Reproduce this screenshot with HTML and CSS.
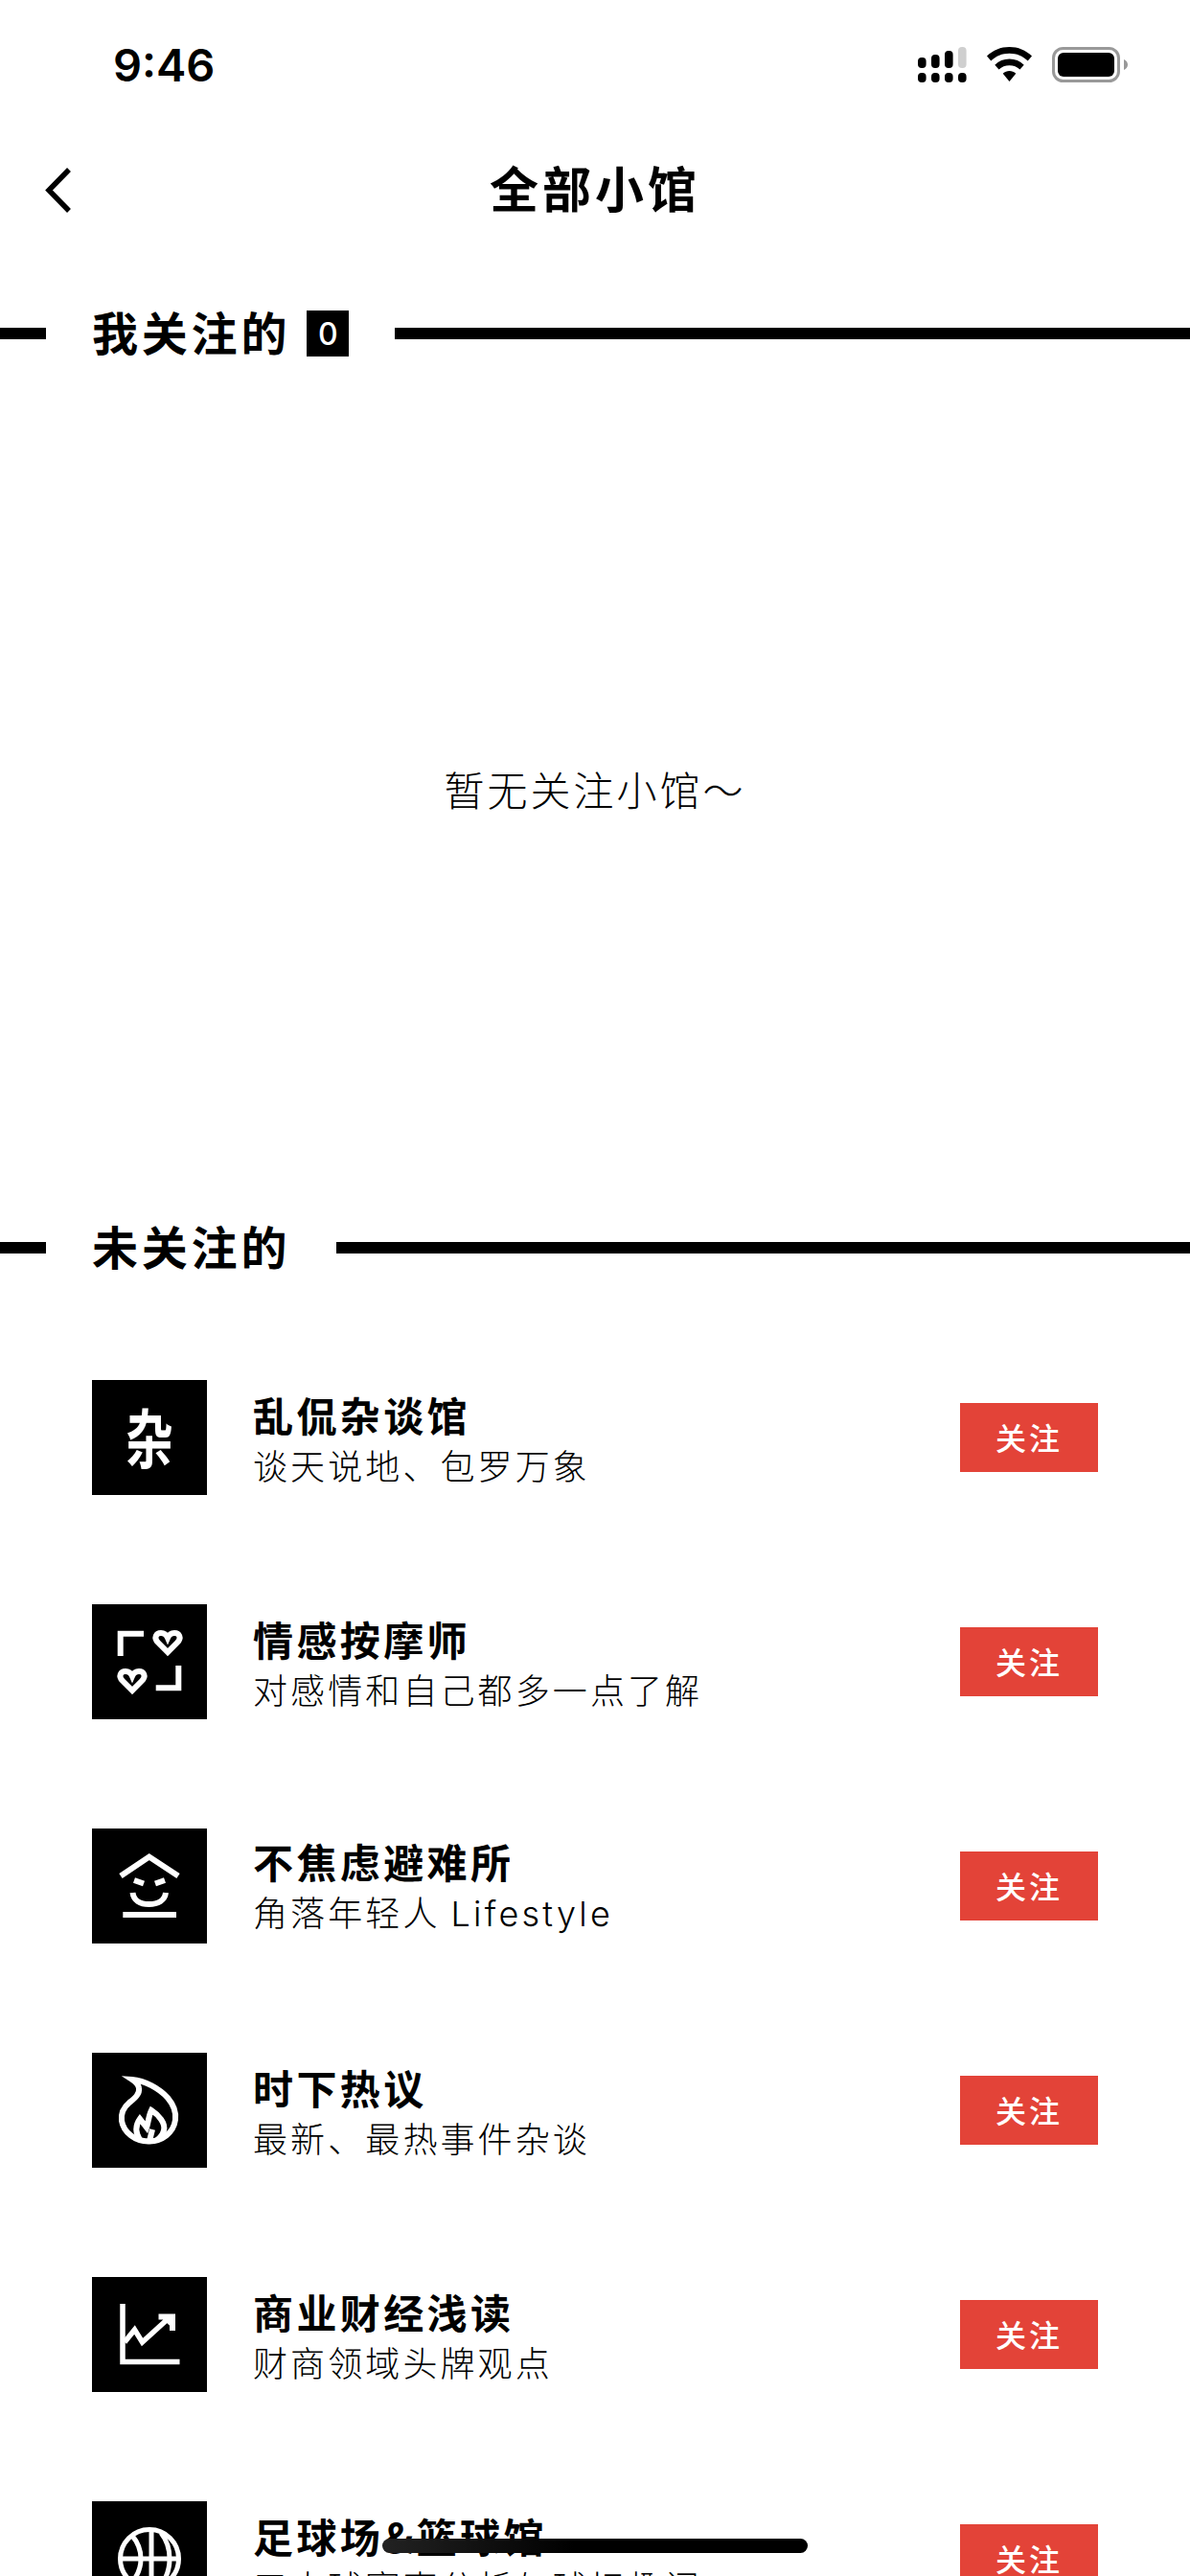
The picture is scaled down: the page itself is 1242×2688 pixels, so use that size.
FILE: index.html
```html
<!DOCTYPE html>
<html lang="zh-CN">
<head>
    <meta charset="UTF-8">
    <meta name="viewport" content="width=device-width, initial-scale=1.0">
    <title>全部小馆</title>
    <link rel="stylesheet" href="styles.css">
</head>
<body>
    <!-- Barra de estado -->
    <div class="status-bar">
        <span class="time">9:46</span>
        <div class="status-icons">
            <svg class="ic-signal" width="51" height="37" viewBox="0 0 51 37">
                <rect x="0" y="11" width="8.6" height="11" rx="4"/>
                <rect x="14" y="8" width="8.6" height="14" rx="4"/>
                <rect x="28" y="4" width="8.6" height="18" rx="4"/>
                <rect x="42" y="0" width="8.6" height="22" rx="4" fill="#cfcfcf"/>
                <rect x="0" y="27" width="8.6" height="10" rx="4"/>
                <rect x="14" y="27" width="8.6" height="10" rx="4"/>
                <rect x="28" y="27" width="8.6" height="10" rx="4"/>
                <rect x="42" y="27" width="8.6" height="10" rx="4"/>
            </svg>
            <svg class="ic-wifi" width="47" height="36" viewBox="0 0 47 36">
                <path d="M23.5 0C14.500 0 6.500 3.300 0 9.500L4.300 14.500C9.500 9.500 16 6.800 23.500 6.800C31 6.800 37.500 9.500 42.700 14.500L47 9.500C40.500 3.300 32.500 0 23.500 0Z"/>
                <path d="M23.500 12.500C17.500 12.500 12.500 14.600 8.300 18.700L12.500 23.600C15.500 20.700 19.200 19.200 23.500 19.200C27.800 19.200 31.500 20.700 34.500 23.600L38.700 18.700C34.500 14.600 29.500 12.500 23.500 12.500Z"/>
                <path d="M23.500 25C21 25 18.700 25.900 16.700 27.700L23.500 36L30.300 27.700C28.300 25.900 26 25 23.500 25Z"/>
            </svg>
            <svg class="ic-battery" width="79" height="37" viewBox="0 0 79 37">
                <rect x="1.500" y="1.500" width="68" height="34" rx="10" fill="none" stroke="#999" stroke-width="3"/>
                <rect x="6" y="6" width="59" height="25" rx="6"/>
                <path d="M75 13C77.500 14 79 16 79 18.500C79 21 77.500 23 75 24Z" fill="#999"/>
            </svg>
        </div>
    </div>

    <!-- Cabecera -->
    <header class="nav">
        <svg class="back" width="28" height="47" viewBox="0 0 28 47">
            <polyline points="25,2 4,23.500 25,45" fill="none" stroke="#000" stroke-width="5.500"/>
        </svg>
        <h1 class="nav-title">全部小馆</h1>
    </header>

    <!-- Seguidos -->
    <div class="section-head first">
        <span class="line-short"></span>
        <h2 class="section-title">我关注的</h2>
        <span class="badge">0</span>
        <span class="line-long"></span>
    </div>
    <div class="empty">
        <p class="empty-text">暂无关注小馆～</p>
    </div>

    <!-- No seguidos -->
    <div class="section-head">
        <span class="line-short"></span>
        <h2 class="section-title">未关注的</h2>
        <span class="line-long"></span>
    </div>

    <div class="list">
        <div class="row">
            <div class="thumb"><span class="thumb-char">杂</span></div>
            <div class="info">
                <h3 class="name">乱侃杂谈馆</h3>
                <p class="desc">谈天说地、包罗万象</p>
            </div>
            <button class="btn-follow">关注</button>
        </div>

        <div class="row">
            <div class="thumb">
                <svg width="120" height="120" viewBox="0 0 120 120" fill="none" stroke="#fff" stroke-width="6">
                    <path d="M29.700 54V30.700H54"/>
                    <path d="M66.700 87.300H90.300V64"/>
                    <path d="M79 50L69 40C64 35 67 30 72 30C75 30 77.500 31.500 79 35C80.500 31.500 83 30 86 30C91 30 94 35 89 40Z"/>
                    <path d="M42 90L32 80C27 75 30 70 35 70C38 70 40.500 71.500 42 75C43.500 71.500 46 70 49 70C54 70 57 75 52 80Z"/>
                </svg>
            </div>
            <div class="info">
                <h3 class="name">情感按摩师</h3>
                <p class="desc">对感情和自己都多一点了解</p>
            </div>
            <button class="btn-follow">关注</button>
        </div>

        <div class="row">
            <div class="thumb">
                <svg width="120" height="120" viewBox="0 0 120 120" fill="none" stroke="#fff" stroke-width="6">
                    <path d="M30 49.500L59.700 29.500L90 49.500"/>
                    <path d="M44 54L54 57.500"/>
                    <path d="M76 54L66 57.500"/>
                    <path d="M42.500 67C43.500 75 50 79 59.500 79C69 79 76 75 77 67"/>
                    <path d="M32.300 90H88"/>
                </svg>
            </div>
            <div class="info">
                <h3 class="name">不焦虑避难所</h3>
                <p class="desc">角落年轻人 <span class="latin">Lifestyle</span></p>
            </div>
            <button class="btn-follow">关注</button>
        </div>

        <div class="row">
            <div class="thumb">
                <svg width="120" height="120" viewBox="0 0 120 120" fill="none" stroke="#fff" stroke-width="6">
                    <path d="M42 28C55 29 70 37 79 47C85 54 88 62 87 70C85 84 73 92 60 92.500C45 93 33 83 31 71C30 63 33 57 39 52C45 47 50 43 49 37C48.500 33 45 30 42 28Z"/>
                    <path d="M50 91C45 83 45 76 50 69L57 78C59 72 59 66 62 60C70 65 77 74 75 81C74 85 72 88 68 91"/>
                    <path d="M60 92L63 80"/>
                </svg>
            </div>
            <div class="info">
                <h3 class="name">时下热议</h3>
                <p class="desc">最新、最热事件杂谈</p>
            </div>
            <button class="btn-follow">关注</button>
        </div>

        <div class="row">
            <div class="thumb">
                <svg width="120" height="120" viewBox="0 0 120 120" fill="none" stroke="#fff" stroke-width="5.500">
                    <path d="M32 28V88.500H91.500"/>
                    <path d="M34 68L44.500 55L52.500 68L80 43"/>
                    <path d="M69.500 41.500H84V56" stroke-width="6"/>
                    <path d="M73 42H84V52L73 42Z" fill="#fff" stroke-width="2"/>
                </svg>
            </div>
            <div class="info">
                <h3 class="name">商业财经浅读</h3>
                <p class="desc">财商领域头牌观点</p>
            </div>
            <button class="btn-follow">关注</button>
        </div>

        <div class="row">
            <div class="thumb">
                <svg width="120" height="120" viewBox="0 0 120 120" fill="none" stroke="#fff" stroke-width="5">
                    <circle cx="60" cy="60" r="30.500"/>
                    <path d="M29 60H91"/>
                    <path d="M62 30V90"/>
                    <path d="M42 36C54 50 54 70 42 84"/>
                    <path d="M72 33C84 48 84 72 72 87"/>
                </svg>
            </div>
            <div class="info">
                <h3 class="name">足球场&amp;篮球馆</h3>
                <p class="desc">五大球赛事分析与球坛趣闻</p>
            </div>
            <button class="btn-follow">关注</button>
        </div>
    </div>

    <!-- Indicador inferior -->
    <div class="home-bar"></div>
</body>
</html>
```

FILE: styles.css
```css
html, body {
    margin: 0;
    padding: 0;
    height: 2688px;
    overflow: hidden;
}
body {
    position: relative;
    background: #fff;
    color: #000;
    font-family: "Noto Sans CJK SC", "Noto Sans", sans-serif;
}
h1, h2, h3, p {
    margin: 0;
    font-weight: normal;
}

/* Barra de estado */
.status-bar {
    box-sizing: border-box;
    height: 132px;
    padding: 2px 65px 0 118px;
    display: flex;
    align-items: center;
    justify-content: space-between;
}
.time {
    font-family: Inter, "Liberation Sans", sans-serif;
    font-size: 47px;
    font-weight: 600;
    line-height: 1;
}
.status-icons {
    display: flex;
    align-items: center;
    gap: 21px;
}
.status-icons svg {
    display: block;
}

/* Cabecera */
.nav {
    height: 132px;
    display: grid;
    grid-template-columns: 1fr auto 1fr;
    align-items: center;
    padding-left: 47px;
    padding-right: 47px;
}
.nav-title {
    font-size: 51px;
    font-weight: 700;
    letter-spacing: 4px;
    line-height: 1;
    padding-bottom: 6px;
}
.back {
    display: block;
}

/* Titulos de seccion */
.section-head {
    height: 48px;
    display: flex;
    align-items: center;
}
.section-head.first {
    margin-top: 60px;
}
.line-short {
    width: 48px;
    height: 12px;
    margin-right: 48px;
    background: #000;
}
.line-long {
    flex: 1;
    height: 12px;
    margin-left: 48px;
    background: #000;
}
.section-title {
    font-size: 48px;
    font-weight: 700;
    letter-spacing: 3.800px;
    line-height: 48px;
    padding-bottom: 6px;
}
.badge {
    width: 44px;
    height: 48px;
    margin-left: 17px;
    background: #000;
    color: #fff;
    font-family: Inter, "Liberation Sans", sans-serif;
    font-size: 32px;
    font-weight: 500;
    line-height: 50px;
    text-align: center;
}

/* Vacio */
.empty {
    height: 906px;
    display: flex;
    align-items: center;
    justify-content: center;
}
.empty-text {
    font-size: 42px;
    font-weight: 200;
    letter-spacing: 3px;
    padding-bottom: 6px;
}

/* Lista */
.list {
    padding: 114px 96px 0;
    display: flex;
    flex-direction: column;
    gap: 114px;
}
.row {
    height: 120px;
    display: flex;
    align-items: center;
}
.thumb {
    width: 120px;
    height: 120px;
    flex-shrink: 0;
    background: #000;
    display: flex;
    align-items: center;
    justify-content: center;
    overflow: hidden;
}
.thumb svg {
    display: block;
}
.thumb-char {
    color: #fff;
    font-size: 50px;
    font-weight: 700;
    line-height: 1;
    padding-bottom: 4px;
    transform: scaleY(1.35);
}
.info {
    flex: 1;
    margin-left: 48px;
    padding-top: 3px;
}
.name {
    font-size: 42px;
    font-weight: 700;
    letter-spacing: 3.400px;
    line-height: 53px;
}
.desc {
    font-size: 36px;
    font-weight: 200;
    letter-spacing: 3.100px;
    line-height: 53px;
}
.latin {
    font-family: Inter, "Noto Sans", sans-serif;
    font-weight: 300;
    letter-spacing: 3.200px;
}
.btn-follow {
    width: 144px;
    height: 72px;
    padding: 0 0 3px;
    border: none;
    background: #e34338;
    color: #fff;
    font-family: "Noto Sans CJK SC", sans-serif;
    font-size: 32px;
    font-weight: 500;
    letter-spacing: 3px;
}

/* Indicador inferior */
.home-bar {
    position: absolute;
    left: 399px;
    top: 2649px;
    width: 444px;
    height: 15px;
    border-radius: 8px;
    background: linear-gradient(90deg, #222, #000 45%);
}
```
